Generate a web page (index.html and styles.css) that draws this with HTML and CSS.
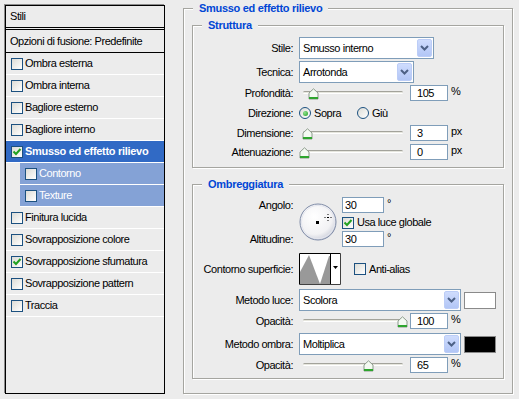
FILE: index.html
```html
<!DOCTYPE html>
<html lang="it">
    <head>
        <meta charset="utf-8">
        <title>Stile livello</title>
        <link rel="stylesheet" href="styles.css">
    </head>
    <body>
        <div class="styles-panel">
            <div class="styles-head">Stili</div>
            <div class="styles-blend">Opzioni di fusione: Predefinite</div>
            <ul class="styles-list">
                <li><span class="check"></span>Ombra esterna</li>
                <li><span class="check"></span>Ombra interna</li>
                <li><span class="check"></span>Bagliore esterno</li>
                <li><span class="check"></span>Bagliore interno</li>
                <li class="selected"><span class="check"><svg width="10" height="10" viewBox="0 0 10 10"><polyline points="1.5,4.5 4,7 8.5,2" fill="none" stroke="#21a121" stroke-width="2"/></svg></span>Smusso ed effetto rilievo</li>
                <li class="sub"><span class="check"></span>Contorno</li>
                <li class="sub"><span class="check"></span>Texture</li>
                <li><span class="check"></span>Finitura lucida</li>
                <li><span class="check"></span>Sovrapposizione colore</li>
                <li><span class="check"><svg width="10" height="10" viewBox="0 0 10 10"><polyline points="1.5,4.5 4,7 8.5,2" fill="none" stroke="#21a121" stroke-width="2"/></svg></span>Sovrapposizione sfumatura</li>
                <li><span class="check"></span>Sovrapposizione pattern</li>
                <li><span class="check"></span>Traccia</li>
            </ul>
        </div>

        <fieldset class="group main">
            <legend>Smusso ed effetto rilievo</legend>

            <fieldset class="group struttura">
                <legend>Struttura</legend>
                <div class="row row-select first">
                    <span class="lbl">Stile:</span>
                    <div class="select w-stile">Smusso interno<span class="drop"><svg width="9" height="6" viewBox="0 0 9 6"><polyline points="1,1 4.5,4.5 8,1" fill="none" stroke="#4d6185" stroke-width="2"/></svg></span></div>
                </div>
                <div class="row row-select tight">
                    <span class="lbl">Tecnica:</span>
                    <div class="select w-tecnica">Arrotonda<span class="drop"><svg width="9" height="6" viewBox="0 0 9 6"><polyline points="1,1 4.5,4.5 8,1" fill="none" stroke="#4d6185" stroke-width="2"/></svg></span></div>
                </div>
                <div class="row tight">
                    <span class="lbl">Profondità:</span>
                    <div class="slider"><svg class="thumb" style="left: 5px" width="11" height="12" viewBox="0 0 11 12"><path d="M1 5 L5.5 0.8 L10 5 V11 H1 Z" fill="#f4faf2" stroke="#8c9a8c"/><rect x="1" y="9" width="9" height="2" fill="#2ea52e"/></svg></div>
                    <span class="field">105</span>
                    <span class="unit">%</span>
                </div>
                <div class="row">
                    <span class="lbl">Direzione:</span>
                    <span class="option first-opt"><span class="radio on"></span>Sopra</span>
                    <span class="option"><span class="radio"></span>Giù</span>
                </div>
                <div class="row">
                    <span class="lbl">Dimensione:</span>
                    <div class="slider"><svg class="thumb" style="left: -1px" width="11" height="12" viewBox="0 0 11 12"><path d="M1 5 L5.5 0.8 L10 5 V11 H1 Z" fill="#f4faf2" stroke="#8c9a8c"/><rect x="1" y="9" width="9" height="2" fill="#2ea52e"/></svg></div>
                    <span class="field">3</span>
                    <span class="unit">px</span>
                </div>
                <div class="row mid">
                    <span class="lbl">Attenuazione:</span>
                    <div class="slider"><svg class="thumb" style="left: -4px" width="11" height="12" viewBox="0 0 11 12"><path d="M1 5 L5.5 0.8 L10 5 V11 H1 Z" fill="#f4faf2" stroke="#8c9a8c"/><rect x="1" y="9" width="9" height="2" fill="#2ea52e"/></svg></div>
                    <span class="field">0</span>
                    <span class="unit">px</span>
                </div>
            </fieldset>

            <fieldset class="group ombreggiatura">
                <legend>Ombreggiatura</legend>
                <div class="angle">
                    <span class="lbl a-label">Angolo:</span>
                    <svg class="dial" width="38" height="38" viewBox="0 0 38 38">
                        <defs>
                            <radialGradient id="dialfill" cx="0.4" cy="0.35" r="0.7">
                                <stop offset="0" stop-color="#ffffff"/>
                                <stop offset="0.7" stop-color="#f2f2f4"/>
                                <stop offset="1" stop-color="#c9ccd8"/>
                            </radialGradient>
                        </defs>
                        <circle cx="19" cy="19" r="18" fill="url(#dialfill)" stroke="#7d8aa6"/>
                        <circle cx="19" cy="19" r="16.5" fill="none" stroke="#e4e6ee"/>
                        <rect x="17" y="18" width="3" height="3" fill="#000"/>
                        <path d="M29 11 V12 M29 14 V15 M29 17 V18 M25.5 14.5 H26.5 M28 14.5 H30 M31.5 14.5 H32.5" stroke="#000" stroke-width="1"/>
                    </svg>
                    <span class="a-input"><span class="field angle-field">30</span><span class="unit">°</span></span>
                    <span class="option a-check"><span class="check"><svg width="10" height="10" viewBox="0 0 10 10"><polyline points="1.5,4.5 4,7 8.5,2" fill="none" stroke="#21a121" stroke-width="2"/></svg></span>Usa luce globale</span>
                    <span class="lbl b-label">Altitudine:</span>
                    <span class="b-input"><span class="field angle-field">30</span><span class="unit">°</span></span>
                </div>
                <div class="row contour-row">
                    <span class="lbl">Contorno superficie:</span>
                    <svg class="contour" width="42" height="32" viewBox="0 0 42 32">
                        <rect x="0" y="0" width="42" height="32" fill="#fff"/>
                        <polygon points="1,31 1,19 10,2 21,31" fill="#999"/>
                        <polygon points="21,31 30,3 31,3 31,31" fill="#999"/>
                        <path d="M0.5 31.5 V0.5 H41.5" fill="none" stroke="#000"/>
                        <path d="M41.5 0.5 V31.5 H0.5" fill="none" stroke="#404040"/>
                        <line x1="31.5" y1="1" x2="31.5" y2="31" stroke="#000"/>
                        <polygon points="34,13 39,13 36.5,16" fill="#000"/>
                    </svg>
                    <span class="option antialias"><span class="check"></span>Anti-alias</span>
                </div>
                <div class="row row-select method">
                    <span class="lbl">Metodo luce:</span>
                    <div class="select w-metodo">Scolora<span class="drop"><svg width="9" height="6" viewBox="0 0 9 6"><polyline points="1,1 4.5,4.5 8,1" fill="none" stroke="#4d6185" stroke-width="2"/></svg></span></div>
                    <span class="swatch white"></span>
                </div>
                <div class="row tight">
                    <span class="lbl">Opacità:</span>
                    <div class="slider"><svg class="thumb" style="left: 94px" width="11" height="12" viewBox="0 0 11 12"><path d="M1 5 L5.5 0.8 L10 5 V11 H1 Z" fill="#f4faf2" stroke="#8c9a8c"/><rect x="1" y="9" width="9" height="2" fill="#2ea52e"/></svg></div>
                    <span class="field">100</span>
                    <span class="unit">%</span>
                </div>
                <div class="row row-select method">
                    <span class="lbl">Metodo ombra:</span>
                    <div class="select w-metodo">Moltiplica<span class="drop"><svg width="9" height="6" viewBox="0 0 9 6"><polyline points="1,1 4.5,4.5 8,1" fill="none" stroke="#4d6185" stroke-width="2"/></svg></span></div>
                    <span class="swatch black"></span>
                </div>
                <div class="row tight">
                    <span class="lbl">Opacità:</span>
                    <div class="slider"><svg class="thumb" style="left: 60px" width="11" height="12" viewBox="0 0 11 12"><path d="M1 5 L5.5 0.8 L10 5 V11 H1 Z" fill="#f4faf2" stroke="#8c9a8c"/><rect x="1" y="9" width="9" height="2" fill="#2ea52e"/></svg></div>
                    <span class="field">65</span>
                    <span class="unit">%</span>
                </div>
            </fieldset>
        </fieldset>
    </body>
</html>
```

FILE: styles.css
```css
body {
    margin: 0;
    width: 519px;
    height: 399px;
    overflow: hidden;
    background: #ececec;
    color: #000;
    font-family: "Liberation Sans", Arial, sans-serif;
    font-size: 11px;
    line-height: 13px;
    letter-spacing: -0.45px;
    display: flex;
    align-items: flex-start;
}

/* left list */
.styles-panel {
    margin: 5px 0 0 5px;
    width: 158px;
    height: 387px;
    border: 1px solid #000;
    box-shadow: -1px -1px 0 #8c8c8c;
}
.styles-head {
    height: 21px;
    line-height: 21px;
    padding-left: 4px;
    border-bottom: 3px double #000;
}
.styles-blend {
    height: 22px;
    line-height: 22px;
    padding-left: 4px;
    border-bottom: 1px solid #000;
}
.styles-list {
    list-style: none;
    margin: 0;
    padding: 0;
}
.styles-list li {
    height: 21px;
    border-bottom: 1px solid #fff;
    display: flex;
    align-items: center;
    padding-left: 5px;
}
.styles-list li.selected {
    background: #316ac5;
    color: #fff;
    font-weight: bold;
    letter-spacing: -0.3px;
}
.styles-list li.sub {
    margin-left: 14px;
    background: #84a2d6;
    color: #fff;
}

.check {
    width: 12px;
    height: 12px;
    box-sizing: border-box;
    border: 1px solid #1c5180;
    background: linear-gradient(135deg, #dcdcd6, #fff);
    margin-right: 2px;
    flex: none;
    display: flex;
    align-items: center;
    justify-content: center;
}
.radio {
    width: 12px;
    height: 12px;
    box-sizing: border-box;
    border: 1px solid #1c5180;
    border-radius: 50%;
    background: linear-gradient(135deg, #dcdcd6, #fff);
    margin-right: 3px;
    flex: none;
    display: flex;
    align-items: center;
    justify-content: center;
}
.radio.on::after {
    content: "";
    width: 5px;
    height: 5px;
    border-radius: 50%;
    background: radial-gradient(circle at 35% 35%, #8fe08f, #21a121);
}

/* group boxes */
.group {
    margin: 0;
    padding: 0;
    min-width: 0;
    box-sizing: border-box;
    border: 1px solid #a5a5a0;
    box-shadow: inset 1px 1px 0 #fff, 1px 1px 0 #fff;
}
.group legend {
    margin-left: 9px;
    padding: 0 6px;
    font-weight: bold;
    letter-spacing: -0.3px;
    color: #0046d5;
    background: #ececec;
    line-height: 13px;
}
.main {
    margin: 2px 0 0 18px;
    width: 330px;
    height: 392px;
}
.struttura {
    margin: 4px 8px 0;
    height: 149px;
}
.ombreggiatura {
    margin: 10px 8px 0;
    height: 201px;
}

/* rows */
.row {
    display: flex;
    align-items: center;
    height: 16px;
    margin-top: 4px;
}
.row.tight {
    margin-top: 2px;
}
.row.mid {
    margin-top: 3px;
}
.row-select {
    height: 22px;
}
.row.first {
    margin-top: 5px;
}
.row.method {
    margin-top: 4px;
}
.lbl {
    width: 100px;
    margin-right: 6px;
    text-align: right;
    flex: none;
}

.select {
    height: 22px;
    box-sizing: border-box;
    border: 1px solid #7f9db9;
    background: #fff;
    display: flex;
    align-items: center;
    padding-left: 3px;
}
.w-stile { width: 135px; }
.w-tecnica { width: 115px; }
.w-metodo { width: 162px; }
.drop {
    margin-left: auto;
    margin-right: 1px;
    width: 15px;
    height: 18px;
    box-sizing: border-box;
    border: 1px solid #bccdf7;
    border-radius: 2px;
    background: linear-gradient(#cfdcfd, #b2c6f6);
    display: flex;
    align-items: center;
    justify-content: center;
}

.field {
    width: 38px;
    height: 16px;
    box-sizing: border-box;
    border: 1px solid #7f9db9;
    background: #fff;
    padding-left: 6px;
    line-height: 14px;
    margin-left: 7px;
    flex: none;
}
.unit {
    margin-left: 3px;
    align-self: flex-start;
    line-height: 12px;
}

.slider {
    position: relative;
    width: 100px;
    height: 16px;
    margin-left: 4px;
    flex: none;
}
.slider::before {
    content: "";
    position: absolute;
    left: 0;
    right: 0;
    top: 6px;
    height: 1px;
    border-top: 1px solid #a3a39b;
    border-bottom: 1px solid #fff;
    background: #e6e6de;
    border-radius: 2px;
}
.thumb {
    position: absolute;
    top: 3px;
}

.option {
    display: flex;
    align-items: center;
}
.first-opt {
    width: 58px;
}

/* angle */
.angle {
    margin-top: 6px;
    display: grid;
    grid-template-columns: 106px 43px auto;
    grid-template-rows: 17px 17px 16px;
    align-items: center;
}
.a-label { grid-column: 1; grid-row: 1; }
.b-label { grid-column: 1; grid-row: 3; }
.dial { grid-column: 2; grid-row: 1 / 4; }
.a-input { grid-column: 3; grid-row: 1; display: flex; align-self: start; }
.a-check { grid-column: 3; grid-row: 2; }
.b-input { grid-column: 3; grid-row: 3; display: flex; }
.angle-field {
    width: 42px;
    margin-left: 0;
    padding-left: 2px;
}
.a-check .check {
    margin-right: 3px;
}

.contour-row {
    height: 32px;
    margin-top: 6px;
}
.contour {
    flex: none;
}
.antialias {
    margin-left: 13px;
}
.antialias .check {
    margin-right: 3px;
}

.swatch {
    width: 32px;
    height: 17px;
    box-sizing: border-box;
    border: 1px solid #8a8a8a;
    margin-left: 3px;
}
.swatch.white { background: #fff; }
.swatch.black { background: #000; }
```
